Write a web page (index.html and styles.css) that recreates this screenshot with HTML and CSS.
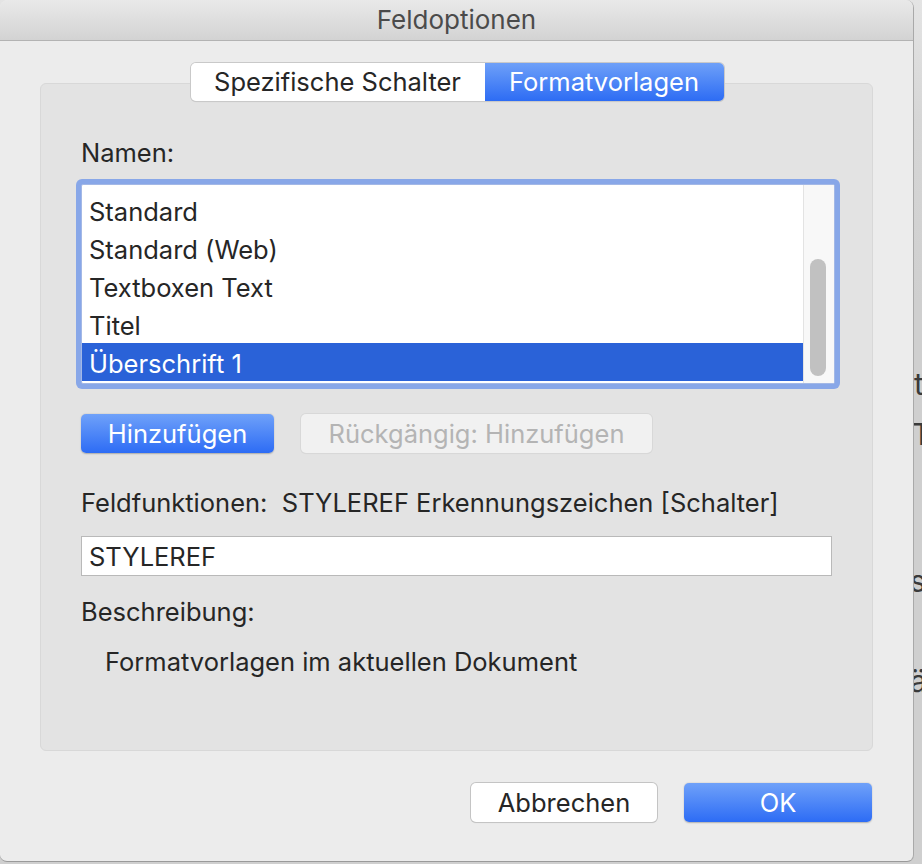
FILE: index.html
```html
<!DOCTYPE html>
<html lang="de">
<head>
<meta charset="utf-8">
<title>Feldoptionen</title>
<link rel="stylesheet" href="styles.css">
</head>
<body>
<div class="backdrop">
  <span class="frag f1">t</span>
  <span class="frag f2">T</span>
  <span class="frag f3">s</span>
  <span class="frag f4">ä</span>
</div>
<div class="window">
  <div class="titlebar">Feldoptionen</div>
  <div class="content">
    <div class="tabs">
      <div class="tab tab-left">Spezifische Schalter</div>
      <div class="tab tab-active">Formatvorlagen</div>
    </div>
    <div class="group">
      <div class="label">Namen:</div>
      <div class="listbox">
        <div class="rows">
          <div class="row">Standard</div>
          <div class="row">Standard (Web)</div>
          <div class="row">Textboxen Text</div>
          <div class="row">Titel</div>
          <div class="row selected">Überschrift 1</div>
        </div>
        <div class="scrollbar"><div class="thumb"></div></div>
      </div>
      <div class="btnrow">
        <div class="btn btn-primary btn-add">Hinzufügen</div>
        <div class="btn btn-disabled btn-undo">Rückgängig: Hinzufügen</div>
      </div>
      <div class="label label-ff">Feldfunktionen:&nbsp; STYLEREF Erkennungszeichen [Schalter]</div>
      <div class="textfield">STYLEREF</div>
      <div class="label label-desc">Beschreibung:</div>
      <div class="label desc">Formatvorlagen im aktuellen Dokument</div>
    </div>
    <div class="footer">
      <div class="btn btn-plain btn-cancel">Abbrechen</div>
      <div class="btn btn-primary btn-ok">OK</div>
    </div>
  </div>
</div>
</body>
</html>
```
FILE: styles.css
```css
html, body {
  margin: 0;
  padding: 0;
}
body {
  width: 922px;
  height: 864px;
  overflow: hidden;
  background: #cfcfcf;
  font-family: "Inter", "Noto Sans", sans-serif;
  color: #262626;
  position: relative;
}
.backdrop {
  position: absolute;
  inset: 0;
  z-index: 0;
  background: linear-gradient(#e4e4e4 0, #d6d6d6 120px, #cfcfcf 300px);
}
.frag {
  position: absolute;
  left: 914px;
  font-size: 30px;
  line-height: 30px;
  color: #3a3a3a;
}
.f1 { top: 369px; }
.f2 { top: 419px; left: 912px; }
.f3 { top: 566px; left: 910px; }
.f4 { top: 666px; left: 910px; }

.window {
  position: relative;
  z-index: 1;
  width: 913px;
  height: 861px;
  background: #ececec;
  border-radius: 8px 8px 7px 7px;
  border-right: 1px solid #a9a9a9;
  border-bottom: 1px solid #9a9a9a;
  display: flex;
  flex-direction: column;
  overflow: hidden;
}
.titlebar {
  height: 40px;
  border-bottom: 1px solid #b3b3b3;
  background: linear-gradient(#e9e9e9, #d3d3d3);
  text-align: center;
  font-size: 26px;
  line-height: 40px;
  color: #4b4b4b;
  flex: none;
}
.content {
  padding: 22px 40px 0 40px;
  display: flex;
  flex-direction: column;
}
.tabs {
  align-self: center;
  display: flex;
  height: 38px;
  margin-left: 1px;
  border-radius: 5px;
  box-shadow: 0 0 0 1px #c9c9c9, 0 1px 1px rgba(0,0,0,0.12);
  position: relative;
  z-index: 2;
  overflow: hidden;
}
.tab {
  font-size: 25.5px;
  line-height: 38px;
  text-align: center;
  white-space: nowrap;
}
.tab-left {
  width: 294px;
  background: #ffffff;
  color: #262626;
}
.tab-active {
  width: 239px;
  background: linear-gradient(#6ea0f8, #2d6cf4);
  color: #ffffff;
}
.group {
  margin-top: -18px;
  background: #e3e3e3;
  border: 1px solid #d8d8d8;
  border-radius: 6px;
  padding: 55px 41px 74px 40px;
  display: flex;
  flex-direction: column;
}
.label {
  font-size: 25.5px;
  line-height: 28px;
  white-space: nowrap;
}
.listbox {
  margin-top: 17px;
  width: 752px;
  height: 198px;
  background: #ffffff;
  border: 1px solid #a3b8e6;
  border-radius: 2px;
  box-shadow: 0 0 0 5px #88a7e8;
  display: flex;
  overflow: hidden;
}
.rows {
  flex: 1;
  padding-top: 6px;
}
.row {
  height: 38px;
  box-sizing: border-box;
  padding-top: 3px;
  line-height: 35px;
  font-size: 25.5px;
  padding-left: 7px;
  white-space: nowrap;
}
.row.selected {
  background: #2a62d8;
  color: #ffffff;
}
.scrollbar {
  width: 30px;
  background: #f8f8f8;
  border-left: 1px solid #e3e3e3;
  position: relative;
}
.thumb {
  position: absolute;
  left: 6px;
  top: 74px;
  width: 16px;
  height: 117px;
  border-radius: 8px;
  background: #c1c1c1;
}
.btnrow {
  margin-top: 30px;
  display: flex;
  gap: 27px;
}
.btn {
  height: 39px;
  line-height: 39px;
  font-size: 25.5px;
  text-align: center;
  border-radius: 5px;
  box-sizing: border-box;
  white-space: nowrap;
}
.btn-primary {
  background: linear-gradient(#6fa1f9, #2d6cf5);
  color: #ffffff;
  box-shadow: 0 0.5px 1.5px rgba(0,0,0,0.25);
}
.btn-add { width: 193px; }
.btn-undo { width: 351px; }
.btn-disabled {
  background: #f1f1f1;
  color: #b4b4b4;
  box-shadow: 0 0 0 1px #d8d8d8, 0 1px 1px rgba(0,0,0,0.06);
}
.btn-plain {
  background: #ffffff;
  color: #262626;
  box-shadow: 0 0 0 1px #c4c4c4, 0 1px 1px rgba(0,0,0,0.15);
}
.label-ff { margin-top: 36px; }
.textfield {
  margin-top: 19px;
  width: 751px;
  height: 40px;
  box-sizing: border-box;
  background: #ffffff;
  border: 1px solid #b9b9b9;
  font-size: 25.5px;
  line-height: 40px;
  padding-left: 7px;
}
.label-desc { margin-top: 22px; }
.desc {
  margin-top: 22px;
  padding-left: 24px;
}
.footer {
  margin-top: 32px;
  display: flex;
  justify-content: flex-end;
  gap: 27px;
  padding-right: 1px;
}
.btn-cancel { width: 186px; }
.btn-ok { width: 188px; }
```
